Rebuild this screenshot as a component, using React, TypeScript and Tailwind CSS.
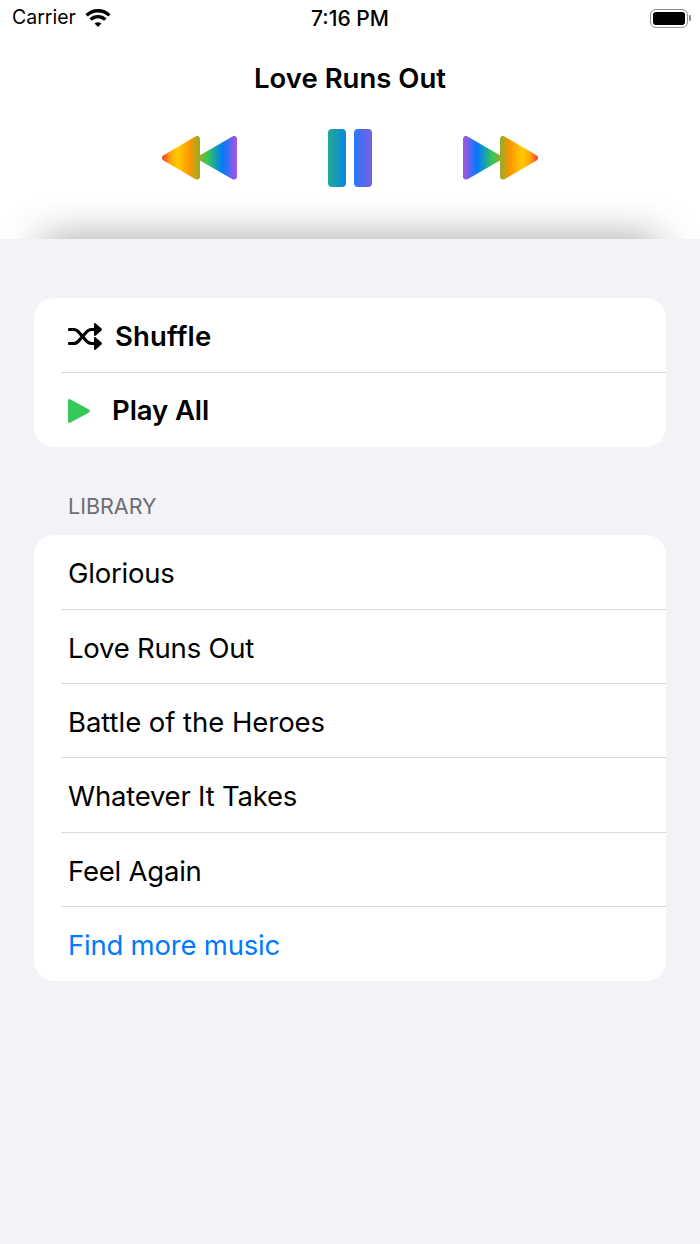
import React from "react";

function Tri({ id, flip }: { id: string; flip?: boolean }) {
  return (
    <svg width="76" height="44" viewBox="0 0 76 44" className={flip ? "-scale-x-100" : ""}>
      <defs>
        <linearGradient id={id} gradientUnits="userSpaceOnUse" x1="0" y1="0" x2="75" y2="0">
          <stop offset="0" stopColor="#ff3b30" />
          <stop offset="0.1" stopColor="#ff9f0a" />
          <stop offset="0.21" stopColor="#ffcc00" />
          <stop offset="0.37" stopColor="#ff9500" />
          <stop offset="0.48" stopColor="#a9a820" />
          <stop offset="0.61" stopColor="#34c759" />
          <stop offset="0.81" stopColor="#007aff" />
          <stop offset="1" stopColor="#af52de" />
        </linearGradient>
      </defs>
      <polygon points="3,21.800 35,3 35,40.600" fill={`url(#${id})`} stroke={`url(#${id})`} strokeWidth="6" strokeLinejoin="round" />
      <polygon points="39.500,21.800 72,3 72,40.600" fill={`url(#${id})`} stroke={`url(#${id})`} strokeWidth="6" strokeLinejoin="round" />
    </svg>
  );
}

function Pause() {
  return (
    <svg width="44" height="58" viewBox="0 0 44 58">
      <defs>
        <linearGradient id="pg" gradientUnits="userSpaceOnUse" x1="0" y1="0" x2="44" y2="0">
          <stop offset="0" stopColor="#22a993" />
          <stop offset="0.4" stopColor="#0a88e0" />
          <stop offset="0.6" stopColor="#2b76fb" />
          <stop offset="1" stopColor="#7a60e0" />
        </linearGradient>
      </defs>
      <rect x="0" y="0" width="18" height="58" rx="4" fill="url(#pg)" />
      <rect x="26" y="0" width="18" height="58" rx="4" fill="url(#pg)" />
    </svg>
  );
}

function Wifi() {
  return (
    <svg width="26" height="18" viewBox="0 0 26 18" fill="none" stroke="#000" strokeWidth="3.4">
      <path d="M1.600 6.400C8 0.200 18 0.200 24.400 6.400" />
      <path d="M5.600 10.600C9.800 6.600 16.200 6.600 20.400 10.600" />
      <path d="M13 18l-3.400-3.600c1.900-1.500 4.900-1.500 6.800 0z" fill="#000" stroke="none" />
    </svg>
  );
}

function Battery() {
  return (
    <div className="flex items-center gap-[1px]">
      <div className="w-[38px] h-[19px] rounded-[6px] border border-[#8e8e93] p-[2px]">
        <div className="w-full h-full rounded-[3px] bg-black" />
      </div>
      <div className="w-[2px] h-[6px] rounded-r-[1px] bg-[#8e8e93]" />
    </div>
  );
}

function ShuffleIcon() {
  const head = "M26 1c0-.800.800-1.200 1.500-.700l6 5.200c.600.500.600 1.500 0 2l-6 5.200c-.700.500-1.500.100-1.500-.700z";
  return (
    <svg width="34" height="27" viewBox="0 0 34 27" fill="none">
      <path d="M1.500 6.500h4c2.500 0 4 1 5.500 3l7 8c1.500 1.800 3 3 5.500 3h3" stroke="#000" strokeWidth="3.200" strokeLinecap="round" />
      <path d="M1.500 20.500h4c2.500 0 4-1 5.500-3l7-8c1.500-1.800 3-3 5.500-3h3" stroke="#000" strokeWidth="3.200" strokeLinecap="round" />
      <path d={head} fill="#000" />
      <path d={head} transform="translate(0 14)" fill="#000" />
    </svg>
  );
}

function PlayIcon() {
  return (
    <svg width="22" height="24" viewBox="0 0 22 24">
      <path d="M0 1.500C0 .400 1 -.300 2 .200l19 10.300c1 .600 1 2.300 0 2.900L2 23.800c-1 .500-2-.200-2-1.300z" fill="#34c759" />
    </svg>
  );
}

function Row({ children, last, blue, wide }: { children: React.ReactNode; last?: boolean; blue?: boolean; wide?: boolean }) {
  return (
    <div className={`${last ? "h-[73.500px]" : "h-[74.350px]"} pl-[27px]`}>
      <div className={`h-full flex items-center pl-[7px] pt-[3.500px] text-[27.500px] ${wide ? "tracking-[-0.050px]" : "tracking-[-0.220px]"} ${blue ? "text-[#007aff]" : "text-black"} ${last ? "" : "border-b border-[#d9d9dd]"}`}>
        {children}
      </div>
    </div>
  );
}

export default function App() {
  return (
    <div className="w-[700px] h-[1244px] bg-[#f2f2f7] text-black overflow-hidden font-['Inter','Liberation_Sans',sans-serif]">
      <header className="h-[239px] bg-white overflow-hidden flex flex-col">
        <div className="h-[36px] shrink-0 flex items-center justify-between pl-[12px] pr-[9px] relative">
          <div className="flex items-center gap-[9px]">
            <span className="text-[19.500px] leading-none">Carrier</span>
            <Wifi />
          </div>
          <span className="text-[21px] font-medium leading-none absolute left-0 right-0 text-center">7:16 PM</span>
          <Battery />
        </div>
        <h1 className="mt-[23px] h-[38px] shrink-0 leading-[38px] text-center text-[27.500px] font-semibold">Love Runs Out</h1>
        <div className="mt-[32px] flex justify-center items-center gap-[90px] h-[58px] shrink-0">
          <Tri id="rw" />
          <Pause />
          <Tri id="ff" flip />
        </div>
        <div className="mt-[52px] mx-[42px] h-[40px] shrink-0 shadow-[0_0_42px_0_rgba(0,0,0,0.38)]" />
      </header>

      <main className="px-[34px] pt-[59px]">
        <section className="bg-white rounded-[20px] overflow-hidden">
          <div className="h-[74.500px] pl-[27px]">
            <div className="h-full flex items-center gap-[13px] pl-[7px] pt-[3px] border-b border-[#d9d9dd] text-[27.500px] font-semibold">
              <ShuffleIcon />
              <span className="tracking-[0.150px]">Shuffle</span>
            </div>
          </div>
          <div className="h-[74px] flex items-center gap-[22px] pl-[34px] pt-[2px] text-[27.500px] font-semibold">
            <PlayIcon />
            <span className="tracking-[-0.100px]">Play All</span>
          </div>
        </section>

        <h2 className="mt-[45px] pl-[34px] text-[21.500px] leading-[28px] text-[#6d6d72] uppercase">Library</h2>

        <section className="mt-[15.900px] bg-white rounded-[20px] overflow-hidden">
          <Row>Glorious</Row>
          <Row>Love Runs Out</Row>
          <Row wide>Battle of the Heroes</Row>
          <Row>Whatever It Takes</Row>
          <Row>Feel Again</Row>
          <Row last blue>Find more music</Row>
        </section>
      </main>
    </div>
  );
}
